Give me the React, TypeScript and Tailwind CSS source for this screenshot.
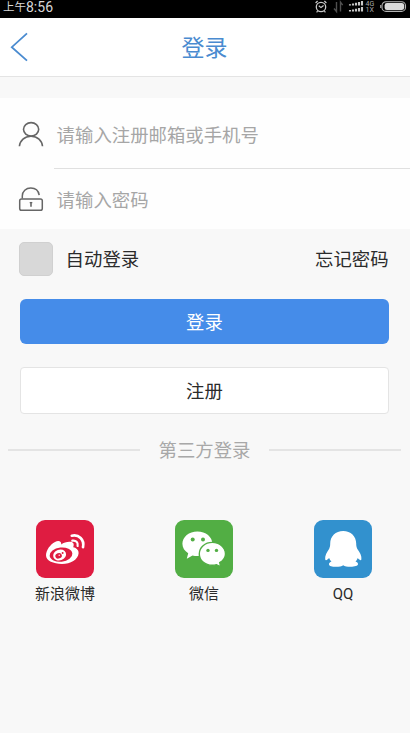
import type { ReactNode } from 'react';

const fontStack =
  "font-['Roboto','Noto_Sans_CJK_SC',sans-serif]";

function StatusBar() {
  return (
    <div className="flex h-[18px] items-start justify-between bg-black pl-[3px] pr-[3px] text-[#d8d8d8]">
      <div className="flex h-[14px] items-center">
        <span className="text-[11.5px] leading-[14px]">上午</span>
        <span className="text-[14px] leading-[17px]">8:56</span>
      </div>
      <svg width="94" height="14" viewBox="313 0 94 14" fill="none">
        {/* Alarm */}
        <circle cx="321" cy="7" r="4.7" stroke="#c9c9c9" strokeWidth="1.3" />
        <path d="M318.8 5.8l2.2 1.8 2.6-2M315.6 3l2-2M326.4 3l-2-2M317.6 11l-1 1.4M324.4 11l1 1.4" stroke="#c9c9c9" strokeWidth="1.2" />
        {/* Data arrows */}
        <path d="M336.5 2v9.5l-2.5-3M340.5 11.5V2.2l2.2 3" stroke="#505050" strokeWidth="1.4" />
        {/* Signal bars */}
        <path d="M350 5.5v-1.3M353 5.5V3.6M356 5.5V2.8M359 5.5V2M362 5.5V1" stroke="#c9c9c9" strokeWidth="2.1" />
        <path d="M350 11.5v-1.6M353 11.5V9.4M356 11.5V8.7M359 11.5V8M362 11.5V7" stroke="#c9c9c9" strokeWidth="2.1" />
        <text x="365.6" y="6" fontSize="7" fill="#a8a8a8" fontFamily="Roboto">4G</text>
        <text x="365.6" y="12" fontSize="7" fill="#a8a8a8" fontFamily="Roboto">1X</text>
        {/* Battery */}
        <rect x="382" y="1.8" width="23.5" height="9.6" rx="4" stroke="#b5b5b5" strokeWidth="1.1" />
        <rect x="384.6" y="3.1" width="19.6" height="7" rx="2.4" fill="#dadada" />
        <path d="M380.7 5v3" stroke="#b5b5b5" />
      </svg>
    </div>
  );
}

function UserIcon() {
  return (
    <svg width="26" height="26" viewBox="0 0 26 26" fill="none" stroke="#666" strokeWidth="1.6">
      <ellipse cx="13.1" cy="8.3" rx="7.6" ry="6.7" />
      <path d="M1.4 25.3C1.9 19.6 6.6 15.2 13 15.2S24.1 19.6 24.5 25.3" />
    </svg>
  );
}

function LockIcon() {
  return (
    <svg width="26" height="26" viewBox="0 0 26 26" fill="none" stroke="#666" strokeWidth="1.5">
      <rect x="1.7" y="13" width="22.6" height="11.2" rx="1.8" />
      <path d="M4.3 12.6V10C4.3 5.4 8 2 12.8 2c4.3 0 7.7 2.7 8.4 7.1" />
      <path d="M13 16v4.8" strokeWidth="1.6" />
      <path d="M11.7 16.6h2.6" strokeWidth="1.3" />
    </svg>
  );
}

function WeiboIcon() {
  return (
    <svg width="58" height="58" viewBox="0 0 58 58" fill="none">
      <path
        d="M10 35.3C10 30 14.4 24.3 19 21.9c3.6-1.8 6.8-.6 6.2 2.6 3.7-3 10.4-3.6 12-1.4.8 1.2.5 2.8 0 4.2 3.5.8 5.6 2.9 5.4 6C42.2 39.6 34.5 44 26 44S10 40.7 10 35.3Z"
        fill="#fff"
      />
      <ellipse cx="25" cy="34.6" rx="11.4" ry="7.1" transform="rotate(-6 25 34.6)" fill="#df1c41" />
      <ellipse cx="23.6" cy="35" rx="6.6" ry="5.4" transform="rotate(-20 23.6 35)" fill="#fff" />
      <ellipse cx="22.6" cy="35.8" rx="3.3" ry="2.7" transform="rotate(-20 22.6 35.8)" fill="#df1c41" />
      <circle cx="26.6" cy="33" r="1" fill="#df1c41" />
      <circle cx="23.2" cy="35.2" r=".7" fill="#fff" />
      <path d="M35.8 15.7c7-1.6 12.8 4 11.2 11.4" stroke="#fff" strokeWidth="2.7" strokeLinecap="round" />
      <path d="M36.3 20.7c3.6-.7 6.1 1.8 5.3 5.2" stroke="#fff" strokeWidth="2.2" strokeLinecap="round" />
    </svg>
  );
}

function WechatIcon() {
  return (
    <svg width="58" height="58" viewBox="0 0 58 58" fill="none">
      <path
        d="M22.4 11.4c-8.4 0-15 5.5-15 12.4 0 4 2.2 7.2 5.8 9.5l-1.4 5.4 5.7-3.3c1.5.5 3.2.7 4.9.7 8.4 0 15-5.5 15-12.3 0-6.9-6.6-12.4-15-12.4Z"
        fill="#fff"
      />
      <circle cx="17.7" cy="19.6" r="2" fill="#52ae44" />
      <circle cx="28" cy="19.6" r="2" fill="#52ae44" />
      <path
        d="M37.3 22.4c-7.3 0-13 5-13 11.5s5.7 11.4 13 11.4c1.5 0 2.9-.2 4.2-.6l4.2 2.2-1-4.3c3.4-2 5.8-5 5.8-8.7 0-6.4-6-11.5-13.2-11.5Z"
        fill="#fff"
        stroke="#52ae44"
        strokeWidth="1.4"
      />
      <circle cx="33" cy="30.4" r="1.7" fill="#52ae44" />
      <circle cx="41.5" cy="30.4" r="1.7" fill="#52ae44" />
    </svg>
  );
}

function QQIcon() {
  return (
    <svg width="58" height="58" viewBox="0 0 58 58" fill="none">
      <path
        d="M29.2 11c-7.6 0-13 5.3-13 12.6 0 2-.2 3.3-1 5.2-2.4 3.4-4.5 7.4-4 10.5.3 1.8 2.1.8 4-1.2.4 1.4 1.1 2.4 2.3 3.5-1.7.6-2.5 1.6-2.5 2.6 0 2 3.2 2.6 6.8 2.6 3.5 0 6-.6 7.4-1.6 1.4 1 4 1.6 7.4 1.6 4 0 7.5-.7 7.4-2.7 0-1-.9-1.9-2.5-2.5 1.2-1.1 1.8-2.1 2.2-3.5 1.9 2 3.4 3.1 3.7 1.2.5-3.1-1.6-7.1-4.2-10.5-.8-1.9-1-3.3-1-5.2C42.2 16.3 36.8 11 29.2 11Z"
        fill="#fff"
      />
    </svg>
  );
}

const inputRows = [
  { key: 'account', placeholder: '请输入注册邮箱或手机号', icon: <UserIcon /> },
  { key: 'password', placeholder: '请输入密码', icon: <LockIcon /> },
];

const providers: { name: string; tile: string; icon: ReactNode }[] = [
  { name: '新浪微博', tile: 'bg-[#df1c41]', icon: <WeiboIcon /> },
  { name: '微信', tile: 'bg-[#52ae44]', icon: <WechatIcon /> },
  { name: 'QQ', tile: 'bg-[#3291ce]', icon: <QQIcon /> },
];

export default function App() {
  return (
    <div className={`flex h-[733px] w-[410px] flex-col overflow-hidden bg-[#f8f8f8] text-[#2b2b2b] ${fontStack}`}>
      <StatusBar />

      <header className="grid h-[59px] grid-cols-[60px_1fr_60px] items-center border-b border-[#e4e4e4] bg-white">
        <button type="button" className="pl-[10px]" aria-label="返回">
          <svg width="18" height="30" viewBox="0 0 18 30" fill="none" stroke="#4a8bd0" strokeWidth="1.8">
            <path d="M17 1.3L1.8 15.2 17 28.7" />
          </svg>
        </button>
        <h1 className="pr-px pt-[4px] text-center text-[23px] leading-[30px] text-[#4a8bd0]">登录</h1>
      </header>

      {/* Formulario */}
      <div className="mt-[21px] h-[131px] bg-[#fefefe]">
        {inputRows.map((row, i) => (
          <div key={row.key} className={i === 0 ? 'flex h-[71px] pl-[18px]' : 'flex h-[60px] pl-[18px]'}>
            <div className="flex w-9 items-center">{row.icon}</div>
            <div className={`flex flex-1 items-center pl-[2.6px] text-[18.4px] text-[#a6a6a6] ${i === 0 ? 'border-b border-[#e0e0e0] pt-[5px]' : 'pt-[3px]'}`}>
              {row.placeholder}
            </div>
          </div>
        ))}
      </div>

      <div className="flex h-[59px] items-center justify-between pl-[19px] pr-[21.4px] text-[18.4px]">
        <div className="flex items-center gap-[12.6px]">
          <span className="size-[34px] rounded-[5px] border border-[#d0d0d0] bg-[#d8d8d8]" />
          <span className="pt-[2px]">自动登录</span>
        </div>
        <span className="pt-[2px]">忘记密码</span>
      </div>

      <div className="mt-[11px] flex flex-col gap-[23px] pl-[20px] pr-[21px]">
        <button type="button" className="h-[45px] rounded-[6px] bg-[#458ce9] pt-[2px] text-[18.4px] text-white">
          登录
        </button>
        <button type="button" className="h-[47px] rounded-[4px] border border-[#e4e4e4] bg-white pt-[2px] text-[18.4px]">
          注册
        </button>
      </div>

      <div className="mt-[21px] flex h-[30px] items-center gap-[19px] pl-[8px] pr-[9px] text-[18.4px] text-[#a8a8a8]">
        <span className="h-[2px] flex-1 bg-[#e4e4e4]" />
        <span className="pt-[2px]">第三方登录</span>
        <span className="h-[2px] flex-1 bg-[#e4e4e4]" />
      </div>

      <div className="mt-[55px] grid grid-cols-[139px_139px_139px] justify-center pr-[2px]">
        {providers.map(({ name, tile, icon }) => (
          <div key={name} className="flex flex-col items-center">
            <div className={`size-[58px] rounded-[9px] ${tile}`}>{icon}</div>
            <span className="mt-[5px] text-[15px] leading-[22px]">{name}</span>
          </div>
        ))}
      </div>
    </div>
  );
}
